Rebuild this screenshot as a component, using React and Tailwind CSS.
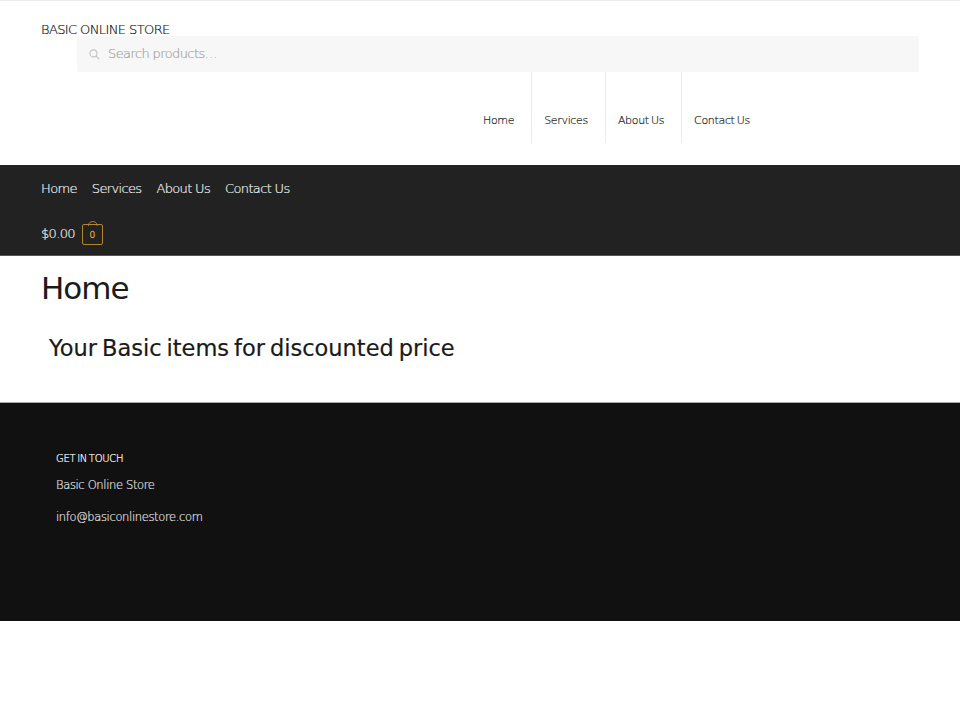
import React from "react";

const links = ["Home", "Services", "About Us", "Contact Us"];

const SearchIcon = () => (
  <svg width="11" height="11" viewBox="0 0 11 11" fill="none" stroke="#c4c4c4" strokeWidth="1.1">
    <circle cx="4.4" cy="4.4" r="3.5" />
    <path d="M7 7L10.2 10.2" />
  </svg>
);

const CartBag = ({ count }) => (
  <div className="relative ml-[7px] h-[21px] w-[21px] rounded-[2px] border border-[#b5842f] text-center text-[9px] leading-[20px] tracking-normal text-[#e0a038] [-webkit-text-stroke:0.4px]">
    {count}
    <svg className="absolute -top-[4px] left-[5px]" width="10" height="5" viewBox="0 0 10 5" fill="none" stroke="#b5842f">
      <path d="M0.5 5V4.2C0.5 2 2.3 0.6 4.8 0.6S9 2 9 4.2V5" />
    </svg>
  </div>
);

const Header = () => (
  <header>
    <div className="h-[165px] border-t border-[#ececec] px-[41px] pt-[20px]">
      <div className="h-[15px] text-[13px] leading-[17px] tracking-[-0.6px] text-[#111]">
        BASIC ONLINE STORE
      </div>
      <div className="ml-[36px] flex h-[36px] items-center rounded-[2px] bg-[#f7f7f7] pl-[12px]">
        <SearchIcon />
        <span className="ml-[8px] text-[13px] tracking-[-0.6px] text-[#a3a3a3]">Search products…</span>
      </div>
      <nav className="ml-[430px] flex h-[71px] text-[11px] tracking-[-0.33px] text-[#222] [word-spacing:-1px]">
        {links.map((link) => (
          <a
            key={link}
            className="border-r border-[#ebebeb] pl-[12px] pr-[17px] pt-[41px] leading-[16px] last:border-r-0"
          >
            {link}
          </a>
        ))}
      </nav>
    </div>
    <div className="h-[91px] border-b border-[#58555a] bg-[#222] pl-[41px] pt-px text-[13px] tracking-[-0.65px] text-[#f0f0f0]">
      <nav className="flex h-[46px] items-center gap-[15px]">
        {links.map((link) => (
          <a key={link}>{link}</a>
        ))}
      </nav>
      <div className="flex h-[44px] items-center">
        <span>$0.00</span>
        <CartBag count={0} />
      </div>
    </div>
  </header>
);

const Footer = () => (
  <footer className="h-[219px] border-t border-[#aaa] bg-[#111] pl-[56px] pt-[48px]">
    <h3 className="text-[10px] leading-[16px] tracking-[-0.3px] text-white [word-spacing:-1px]">GET IN TOUCH</h3>
    <p className="mt-[10px] text-[11.5px] leading-[16px] tracking-[-0.35px] text-[#e0e0e0]">Basic Online Store</p>
    <p className="mt-[16px] text-[11.5px] leading-[16px] tracking-[-0.35px] text-[#e0e0e0]">
      info@basiconlinestore.com
    </p>
  </footer>
);

export default function App() {
  return (
    <div className="min-h-[720px] bg-white font-['DejaVu_Sans',sans-serif] font-extralight whitespace-nowrap [-webkit-text-stroke:0.2px]">
      <Header />
      <main className="h-[146px] pl-[41px] pt-[12px] font-normal text-[#1a1a1a] [-webkit-text-stroke:0]">
        <h1 className="text-[31px] leading-[40px] tracking-[-1px]">Home</h1>
        <h2 className="ml-[8px] mt-[24px] text-[22.5px] leading-[32px] [word-spacing:-2.2px] [-webkit-text-stroke:0.2px]">
          Your Basic items for discounted price
        </h2>
      </main>
      <Footer />
    </div>
  );
}
